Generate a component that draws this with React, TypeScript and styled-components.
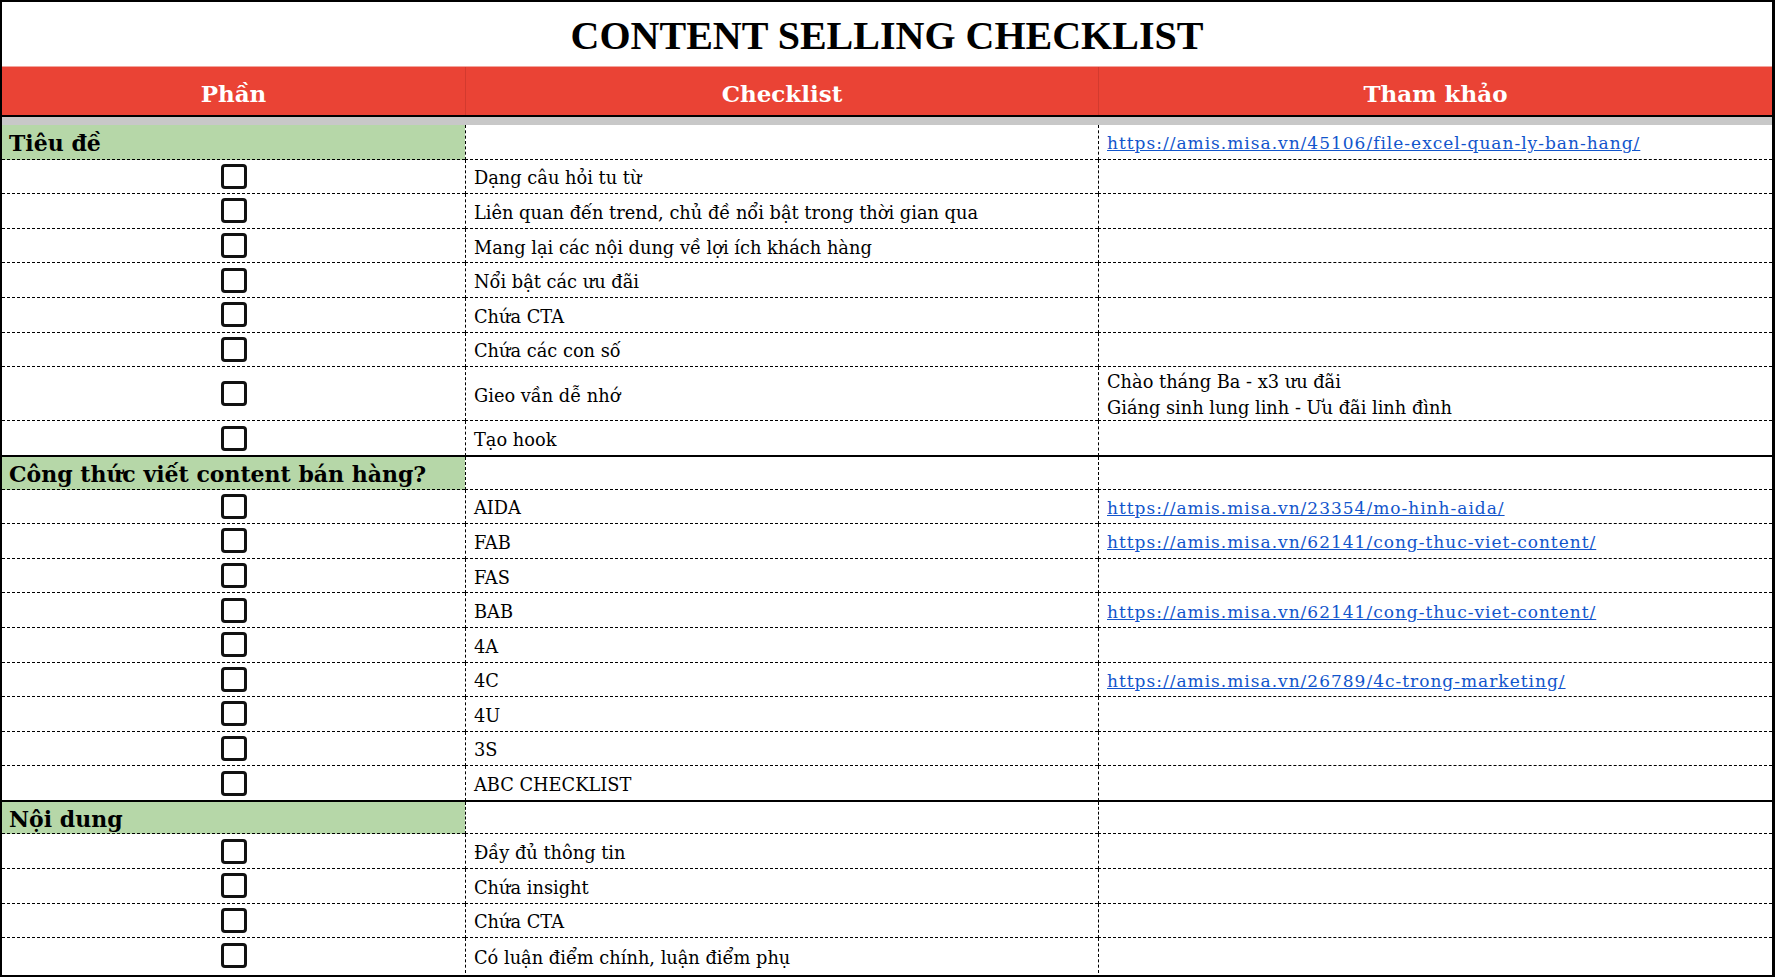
import React from 'react'
import styled, { createGlobalStyle } from 'styled-components'

const GlobalStyle = createGlobalStyle`
  html, body {
    margin: 0;
    padding: 0;
    background: #fff;
  }
  body {
    font-family: "DejaVu Serif", "Liberation Serif", serif;
    color: #000;
  }
`

const COLS = '463px 633px 1fr'

type Item = {
    text: string
    ref?: string
    link?: boolean
    tall?: boolean
}

type Section = {
    title: string
    ref?: string
    items: Item[]
}

const sections: Section[] = [
    {
        title: 'Tiêu đề',
        ref: 'https://amis.misa.vn/45106/file-excel-quan-ly-ban-hang/',
        items: [
            { text: 'Dạng câu hỏi tu từ' },
            { text: 'Liên quan đến trend, chủ đề nổi bật trong thời gian qua' },
            { text: 'Mang lại các nội dung về lợi ích khách hàng' },
            { text: 'Nổi bật các ưu đãi' },
            { text: 'Chứa CTA' },
            { text: 'Chứa các con số' },
            { text: 'Gieo vần dễ nhớ', ref: 'Chào tháng Ba - x3 ưu đãi\nGiáng sinh lung linh - Ưu đãi linh đình', tall: true },
            { text: 'Tạo hook' },
        ],
    },
    {
        title: 'Công thức viết content bán hàng?',
        items: [
            { text: 'AIDA', ref: 'https://amis.misa.vn/23354/mo-hinh-aida/', link: true },
            { text: 'FAB', ref: 'https://amis.misa.vn/62141/cong-thuc-viet-content/', link: true },
            { text: 'FAS' },
            { text: 'BAB', ref: 'https://amis.misa.vn/62141/cong-thuc-viet-content/', link: true },
            { text: '4A' },
            { text: '4C', ref: 'https://amis.misa.vn/26789/4c-trong-marketing/', link: true },
            { text: '4U' },
            { text: '3S' },
            { text: 'ABC CHECKLIST' },
        ],
    },
    {
        title: 'Nội dung',
        items: [
            { text: 'Đầy đủ thông tin' },
            { text: 'Chứa insight' },
            { text: 'Chứa CTA' },
            { text: 'Có luận điểm chính, luận điểm phụ' },
        ],
    },
]

function App() {
    return (
        <>
            <GlobalStyle />
            <Sheet>
                <Title>CONTENT SELLING CHECKLIST</Title>
                <HeaderRow>
                    <HeaderCell>Phần</HeaderCell>
                    <HeaderCell divider>Checklist</HeaderCell>
                    <HeaderCell divider>Tham khảo</HeaderCell>
                </HeaderRow>
                <FreezeBar />
                {sections.map((section, si) => (
                    <React.Fragment key={section.title}>
                        <Row thick={si > 0}>
                            <SectionCell>{section.title}</SectionCell>
                            <Cell divider />
                            <Cell divider>
                                {section.ref && <Link>{section.ref}</Link>}
                            </Cell>
                        </Row>
                        {section.items.map((item, ii) => (
                            <Row key={ii} tall={item.tall}>
                                <BoxCell>
                                    <Box />
                                </BoxCell>
                                <Cell divider>{item.text}</Cell>
                                <Cell divider>
                                    {item.ref && (item.link ? <Link>{item.ref}</Link> : <Note>{item.ref}</Note>)}
                                </Cell>
                            </Row>
                        ))}
                    </React.Fragment>
                ))}
            </Sheet>
        </>
    )
}

const Sheet = styled.div`
    width: 1775px;
    height: 977px;
    box-sizing: border-box;
    border: 2px solid #000;
    border-right-width: 3px;
    display: flex;
    flex-direction: column;
    overflow: hidden;
`

const Title = styled.div`
    height: 64px;
    flex: none;
    display: flex;
    align-items: center;
    justify-content: center;
    font-family: "Liberation Serif", "DejaVu Serif", serif;
    font-size: 40px;
    font-weight: bold;
    padding-top: 3px;
    box-sizing: border-box;
`

const HeaderRow = styled.div`
    height: 51px;
    flex: none;
    box-sizing: border-box;
    display: grid;
    grid-template-columns: ${COLS};
    background: #ea4335;
    border-top: 1px solid #f2a59e;
    border-bottom: 2px solid #000;
`

const HeaderCell = styled.div<{ divider?: boolean }>`
    display: flex;
    align-items: center;
    justify-content: center;
    color: #fff;
    font-size: 23px;
    font-weight: bold;
    padding-top: 5px;
    border-left: ${p => (p.divider ? '1px solid #d33a2e' : 'none')};
`

const FreezeBar = styled.div`
    height: 8px;
    flex: none;
    background: #c8c8c8;
`

const Row = styled.div<{ tall?: boolean; thick?: boolean }>`
    height: ${p => (p.tall ? '54.2px' : '34.6px')};
    flex: none;
    box-sizing: border-box;
    display: grid;
    grid-template-columns: ${COLS};
    border-top: ${p => (p.thick ? '2px solid #000' : 'none')};
    margin-top: ${p => (p.thick ? '-1px' : '0')};

    &:last-child > div {
        border-bottom: none;
    }
`

const Cell = styled.div<{ divider?: boolean }>`
    display: flex;
    flex-direction: column;
    justify-content: center;
    padding: 3px 0 0 8px;
    font-size: 17.8px;
    box-sizing: border-box;
    border-bottom: 1px dashed #000;
    border-left: ${p => (p.divider ? '1px dashed #000' : 'none')};
    white-space: nowrap;
    overflow: hidden;
`

const SectionCell = styled.div`
    display: flex;
    align-items: center;
    padding: 3px 0 0 7px;
    background: #b6d7a8;
    font-size: 22px;
    font-weight: bold;
    box-sizing: border-box;
    border-bottom: 1px dashed #000;
    white-space: nowrap;
`

const BoxCell = styled.div`
    display: flex;
    align-items: center;
    justify-content: center;
    box-sizing: border-box;
    border-bottom: 1px dashed #000;
`

const Box = styled.span`
    width: 26px;
    height: 25px;
    box-sizing: border-box;
    border: 3px solid #111;
    border-radius: 4px;
    margin-left: 1px;
`

const Link = styled.span`
    color: #1155cc;
    text-decoration: underline;
    font-size: 17px;
    letter-spacing: 1px;
`

const Note = styled.span`
    white-space: pre-line;
    line-height: 26px;
`

export default App
